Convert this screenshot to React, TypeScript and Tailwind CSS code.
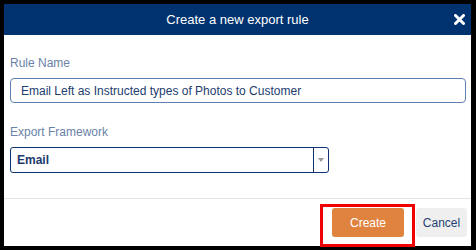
export default function App() {
  return (
    <div className="relative w-[476px] h-[250px] bg-black pt-[4px] pl-[4px] pr-[5px] pb-[4px] font-['Liberation_Sans',Arial,sans-serif]">
      <div className="flex flex-col h-[242px] bg-white">
        {/* header */}
        <div className="relative flex items-center justify-center h-[31px] bg-[#00326f] shrink-0">
          <span className="text-[13px] text-white leading-none">Create a new export rule</span>
          <svg
            className="absolute right-[6px] top-[10px]"
            width="11"
            height="11"
            viewBox="0 0 11 11"
          >
            <path d="M1.5 1.5 L9.5 9.5 M9.5 1.5 L1.5 9.5" stroke="white" strokeWidth="3" strokeLinecap="round" />
          </svg>
        </div>

        {/* body */}
        <div className="flex flex-col pl-[6px] pr-[5px] pt-[21px] flex-1">
          <label className="text-[12px] leading-[14px] text-[#6a83a8]">Rule Name</label>
          <div className="mt-[8px] h-[25px] border border-[#5f82b3] rounded-[4px] flex items-center pl-[10px]">
            <span className="text-[12px] text-[#1d3c6e] leading-none">
              Email Left as Instructed types of Photos to Customer
            </span>
          </div>

          <label className="mt-[22px] text-[12px] leading-[14px] text-[#6a83a8]">Export Framework</label>
          <div className="mt-[8px] w-[319px] h-[26px] border border-[#0d3270] rounded-[3px] flex">
            <div className="flex-1 flex items-center pl-[6px]">
              <span className="text-[12px] font-bold text-[#1b3a6b] leading-none">Email</span>
            </div>
            <div className="w-[15px] border-l border-[#0d3270] flex items-center justify-center">
              <svg width="6" height="4" viewBox="0 0 6 4">
                <path d="M0 0 L6 0 L3 4 Z" fill="#9a9a9a" />
              </svg>
            </div>
          </div>
        </div>

        {/* footer */}
        <div className="h-[48px] border-t border-[#e3e3e3] flex items-center justify-end gap-[12px] pr-[4px] shrink-0">
          <button className="w-[72px] h-[29px] rounded-[3px] bg-[#e0833f] text-white text-[12px]">Create</button>
          <button className="w-[51px] h-[29px] rounded-[3px] bg-[#efefef] text-[#1f3f6f] text-[12px]">Cancel</button>
        </div>
      </div>

      {/* annotation highlight */}
      <div className="absolute left-[320px] top-[204px] w-[95px] h-[43px] border-[3px] border-[#f00000]" />
    </div>
  );
}
